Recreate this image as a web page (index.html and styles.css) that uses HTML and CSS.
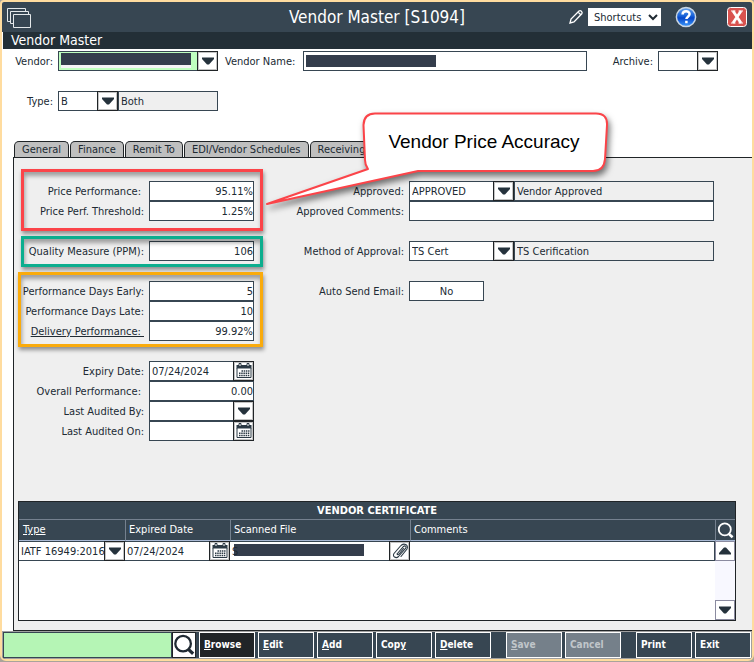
FILE: index.html
```html
<!DOCTYPE html>
<html lang="en">
<head>
<meta charset="utf-8">
<title>Vendor Master [S1094]</title>
<link rel="stylesheet" href="styles.css">
</head>
<body>
<svg class="defs" aria-hidden="true">
  <symbol id="down" viewBox="0 0 18 18"><path d="M3 5.500h12v1.500l-5 5.500H8L3 7z" fill="#25323c"/></symbol>
  <symbol id="up" viewBox="0 0 18 18"><path d="M3 12.500h12V11l-5-5.500H8L3 11z" fill="#25323c"/></symbol>
  <symbol id="cal" viewBox="0 0 18 18">
    <path d="M1.500 3h15v3.500h-15z" fill="#2c3a45"/>
    <path d="M4 1.500h2v3H4zM12 1.500h2v3h-2z" fill="#fff" stroke="#2c3a45"/>
    <path d="M2 6v9.500h14V6" fill="none" stroke="#2c3a45"/>
    <path d="M6.500 9h8M4 11.300h10.500M4 13.500h10.500" stroke="#2c3a45" stroke-width="1.500" stroke-dasharray="1.500 .7"/>
  </symbol>
  <symbol id="lens" viewBox="0 0 24 24"><circle cx="11" cy="10.500" r="8.500" fill="none" stroke="currentColor" stroke-width="2.500"/><path d="M16.500 16.500l5.500 5" stroke="currentColor" stroke-width="3.600"/></symbol>
  <symbol id="clip" viewBox="0 0 18 18"><path d="M6 12l6.500-7.500c1.500-1.500 3.300 0 2.200 1.600L7.500 14.500C5 17 1 14.500 3 11.500L9.500 4c3-3.500 8.500-1.500 6.500 3l-6 7.500M6 12c.6 1 1.700.6 2.500-.5l4-5" fill="none" stroke="#2c3a45" stroke-width="1.100" stroke-linecap="round"/></symbol>
</svg>

<main class="window">
  <header class="titlebar">
    <svg class="stack" width="26" height="22" viewBox="0 0 26 22" aria-hidden="true">
      <g fill="#374652" stroke="#e4e8ea"><path d="M.5 2.500h18v13h-18z"/><path d="M3.500 5.500h18v12h-18z"/><path d="M6.500 8.500h17v13h-17z"/></g>
    </svg>
    <h1>Vendor Master [S1094]</h1>
    <div class="tools">
      <svg class="pencil" width="16" height="16" viewBox="0 0 16 16" aria-hidden="true"><path d="M2 14l1-4 8-8c1.500-1.200 4 1 2.800 2.800L6 13zM10 3l3 3" fill="none" stroke="#fff" stroke-width="1.300"/></svg>
      <select class="shortcuts" aria-label="Shortcuts"><option>Shortcuts</option></select>
      <button class="help" aria-label="Help"><svg width="22" height="22" viewBox="0 0 22 22"><defs><linearGradient id="blue" x2="0" y2="1"><stop stop-color="#6fa8ee"/><stop offset=".45" stop-color="#1560d8"/><stop offset=".55" stop-color="#0646c8"/><stop offset="1" stop-color="#3d9cff"/></linearGradient></defs><circle cx="11" cy="11" r="9.600" fill="url(#blue)" stroke="#c9d6e4" stroke-width="1.500"/><path d="M7.600 8.500c0-4.300 7-4.300 7-.4 0 2.600-3.200 2.500-3.200 5M11.400 14.800v2.400" fill="none" stroke="#fff" stroke-width="2.500"/></svg></button>
      <button class="close" aria-label="Close"><svg width="20" height="20" viewBox="0 0 20 20"><rect x=".5" y=".5" width="19" height="19" rx="3" fill="#d9534f" stroke="#fff"/><path d="M6 4l8 12M14 4L6 16" stroke="#fff" stroke-width="2.800"/><path d="M4 4h4.500M11.500 4H16M4 16h4.500M11.500 16H16" stroke="#fff" stroke-width="1.200"/></svg></button>
    </div>
  </header>
  <h2 class="subtitle">Vendor Master</h2>

  <section class="head">
    <div class="line">
      <label class="lead" for="vendor">Vendor:</label>
      <span class="combo wide"><input id="vendor" class="green masked"><button aria-label="Choose vendor"><svg><use href="#down"/></svg></button></span>
      <label class="name" for="vname">Vendor Name:</label>
      <input id="vname" class="grow masked">
      <label class="archive" for="arch">Archive:</label>
      <span class="combo small"><input id="arch"><button aria-label="Choose archive"><svg><use href="#down"/></svg></button></span>
    </div>
    <div class="line">
      <label class="lead" for="type">Type:</label>
      <span class="combo small"><input id="type" value="B"><button aria-label="Choose type"><svg><use href="#down"/></svg></button></span>
      <input class="desc" value="Both" readonly aria-label="Type description">
    </div>
  </section>

  <nav class="tabs">
    <button>General</button><button>Finance</button><button>Remit To</button><button>EDI/Vendor Schedules</button><button>Receiving</button>
  </nav>

  <section class="panel">
    <div class="columns">
      <div class="col left">
        <div class="group red">
          <div class="row"><label class="inset" for="pp">Price Performance:</label><input id="pp" class="num" value="95.11%"></div>
          <div class="row"><label for="pt">Price Perf. Threshold:</label><input id="pt" class="num" value="1.25%"></div>
        </div>
        <div class="group teal">
          <div class="row"><label for="qm">Quality Measure (PPM):</label><input id="qm" class="num" value="106"></div>
        </div>
        <div class="group orange">
          <div class="row"><label for="pe">Performance Days Early:</label><input id="pe" class="num" value="5"></div>
          <div class="row"><label for="pl">Performance Days Late:</label><input id="pl" class="num" value="10"></div>
          <div class="row"><label for="dp"><u>Delivery Performance:&nbsp;</u></label><input id="dp" class="num" value="99.92%"></div>
        </div>
        <div class="group">
          <div class="row"><label for="ed">Expiry Date:</label><span class="combo"><input id="ed" value="07/24/2024"><button aria-label="Pick expiry date"><svg><use href="#cal"/></svg></button></span></div>
          <div class="row"><label class="inset" for="op">Overall Performance:</label><input id="op" class="num" value="0.00"></div>
          <div class="row"><label for="lb">Last Audited By:</label><span class="combo"><input id="lb"><button aria-label="Choose auditor"><svg><use href="#down"/></svg></button></span></div>
          <div class="row"><label for="lo">Last Audited On:</label><span class="combo"><input id="lo"><button aria-label="Pick audit date"><svg><use href="#cal"/></svg></button></span></div>
        </div>
      </div>
      <div class="col right">
        <div class="group">
          <div class="row"><label for="ap">Approved:</label><span class="combo code"><input id="ap" value="APPROVED"><button aria-label="Choose approval"><svg><use href="#down"/></svg></button></span><input class="desc grow" value="Vendor Approved" readonly aria-label="Approval description"></div>
          <div class="row"><label for="ac">Approved Comments:</label><input id="ac" class="grow"></div>
        </div>
        <div class="group">
          <div class="row"><label for="ma">Method of Approval:</label><span class="combo code"><input id="ma" value="TS Cert"><button aria-label="Choose method"><svg><use href="#down"/></svg></button></span><input class="desc grow" value="TS Cerification" readonly aria-label="Method description"></div>
        </div>
        <div class="group">
          <div class="row"><label for="ae">Auto Send Email:</label><input id="ae" class="flag" value="No"></div>
        </div>
      </div>
    </div>

    <table class="cert">
      <colgroup><col class="c-type"><col class="c-date"><col class="c-file"><col><col class="c-bar"></colgroup>
      <thead>
        <tr class="cap"><th colspan="5">VENDOR CERTIFICATE</th></tr>
        <tr class="heads"><th><u>Type</u></th><th>Expired Date</th><th>Scanned File</th><th>Comments</th><th class="find"><button aria-label="Search certificates"><svg><use href="#lens"/></svg></button></th></tr>
      </thead>
      <tbody>
        <tr class="entry">
          <td><span class="combo"><input value="IATF 16949:2016" aria-label="Type"><button aria-label="Choose type"><svg><use href="#down"/></svg></button></span></td>
          <td><span class="combo"><input value="07/24/2024" aria-label="Expired date"><button aria-label="Pick date"><svg><use href="#cal"/></svg></button></span></td>
          <td><span class="combo"><input class="masked file" value="S" aria-label="Scanned file"><button aria-label="Attach file"><svg><use href="#clip"/></svg></button></span></td>
          <td><input aria-label="Comments"></td>
          <td rowspan="2"><div class="scroll"><button aria-label="Scroll up"><svg><use href="#up"/></svg></button><button aria-label="Scroll down"><svg><use href="#down"/></svg></button></div></td>
        </tr>
        <tr class="blank"><td colspan="4"></td></tr>
      </tbody>
    </table>

    <aside class="callout">
      <svg viewBox="0 0 354 106" aria-hidden="true"><path d="M115 5.500H336Q347.500 5.500 347 17L345 51Q344 63 333 63H158L7 96L108 61Q105 57 105 52L103.500 17Q104 5.500 115 5.500Z" fill="#fff" stroke="#fb4449" stroke-width="2" stroke-linejoin="round"/></svg>
      <p>Vendor Price Accuracy</p>
    </aside>
  </section>

  <footer class="actions">
    <input class="query" aria-label="Search">
    <button class="go" aria-label="Search"><svg><use href="#lens"/></svg></button>
    <button class="act current"><u>B</u>rowse</button>
    <button class="act"><u>E</u>dit</button>
    <button class="act"><u>A</u>dd</button>
    <button class="act">Cop<u>y</u></button>
    <button class="act"><u>D</u>elete</button>
    <button class="act apart" disabled><u>S</u>ave</button>
    <button class="act" disabled>Cancel</button>
    <button class="act apart">Print</button>
    <button class="act">Exit</button>
  </footer>
</main>
</body>
</html>
```
FILE: styles.css
```css
* { box-sizing: border-box; }

body {
  margin: 0;
  background: #a9a49a;
  color: #202a33;
  font: 11px/20px "DejaVu Sans Condensed", "DejaVu Sans", sans-serif;
}

h1, h2, p { margin: 0; font-weight: normal; }
.defs { position: absolute; width: 0; height: 0; }
input, button, select { font: inherit; color: inherit; border-radius: 0; margin: 0; }
button { padding: 0; border: 0; background: none; }
svg { display: block; }
label { height: 20px; padding-top: 1px; white-space: nowrap; text-align: right; }

.window {
  border: 2px solid #ffdc9f;
  border-radius: 4px 4px 6px 6px;
  background: #fff;
  overflow: hidden;
}

.titlebar {
  display: grid;
  grid-template-columns: 1fr auto 1fr;
  align-items: center;
  height: 30px;
  padding: 0 5px;
  background: #374652;
  color: #fff;
}
.titlebar h1 { font-size: 17px; }
.tools { display: flex; align-items: center; justify-content: flex-end; }
.pencil { margin-right: 4px; }
.shortcuts {
  width: 73px;
  height: 18px;
  border: 0;
  padding: 0 0 0 2px;
  background: #fff;
  color: #202a33;
}
.help { margin: 0 30px 0 14px; }

.subtitle {
  height: 17px;
  margin-left: 1px;
  padding-left: 8px;
  background: #232f37;
  color: #fff;
  font-size: 14px;
  line-height: 16px;
}

.head {
  display: flex;
  flex-direction: column;
  gap: 20px;
  padding: 2px 34px 30px 0;
}
.line { display: flex; }
.lead { width: 51px; margin-right: 5px; }
.name { margin: 0 8px 0 7px; }
.archive { margin: 0 5px 0 26px; }

input {
  display: block;
  min-width: 0;
  height: 20px;
  padding: 2px 2px 0;
  border: 1px solid #374652;
  background: #fff;
}
.grow { flex: 1; }
.desc { background: #efefef; width: 100px; }
.green { background-color: #bfffbf; }
.masked {
  background-image: linear-gradient(#343d4c, #343d4c);
  background-repeat: no-repeat;
  background-size: 130px 12px;
  background-position: 2px 3px;
}

.combo { display: flex; width: 105px; }
.combo input { flex: 1; border-right: 0; }
.combo button {
  width: 21px;
  height: 20px;
  border: 1px solid #202427;
  background: #fff;
  box-shadow: inset 0 0 0 1px #c4c4c4;
}
.combo svg { width: 18px; height: 18px; margin: 0 auto; }
.wide { width: 160px; }
.wide .masked {
  background-image: linear-gradient(#343d4c, #343d4c), linear-gradient(#f6f3f6, #f6f3f6);
  background-size: 130px 12px, 130px 15px;
  background-position: 2px 1px;
}
.small { width: 60px; }

.tabs {
  display: flex;
  gap: 1px;
  margin-left: 12px;
}
.tabs button {
  height: 16px;
  padding: 0 7px;
  border: solid #202427;
  border-width: 1px 1px 0;
  border-radius: 5px 5px 0 0;
  background: #bfbfbf;
  line-height: 15px;
}

.panel {
  position: relative;
  margin-left: 11px;
  padding: 23px 16px 9px 4px;
  border: solid #202427;
  border-width: 1px 0 1px 1px;
  background: #efefef;
}
.columns { display: flex; padding-right: 22px; }
.col { display: flex; flex-direction: column; gap: 20px; }
.left { width: 236px; }
.right { flex: 1; }
.group { position: relative; }
.row { display: flex; }
.row label { flex: none; width: 126px; margin-right: 5px; }
.row .inset { padding-right: 3px; }
.left label { display: flex; justify-content: flex-end; }
.right .row label { width: 150px; }
.num { width: 105px; padding-right: 0; text-align: right; }
.flag { width: 75px; text-align: center; }

.red::after, .teal::after, .orange::after {
  content: "";
  position: absolute;
  border: 3px solid;
  pointer-events: none;
  box-shadow: 1px 3px 4px #0006, inset 1px 4px 4px #0005;
}
.red::after { inset: -12px -9px -10px 3px; border-color: #fb4449; }
.teal::after { inset: -5px -9px -6px 3px; border-color: #0cae8e; }
.orange::after { inset: -9px -9px -6px 0; border-color: #faab0c; }

.cert {
  width: 100%;
  margin-top: 60px;
  table-layout: fixed;
  border-collapse: separate;
  border-spacing: 0;
  border: 1px solid #202427;
  background: #fff;
}
.cert th, .cert td { padding: 0; }
.c-type { width: 106px; }
.c-date { width: 105px; }
.c-file { width: 180px; }
.c-bar { width: 20px; }
.cert th { background: #374652; color: #fff; text-align: left; font-weight: normal; }
.cert .cap th { height: 18px; line-height: 17px; text-align: center; font-weight: bold; border-bottom: 1px solid #75818f; }
.heads th { height: 21px; border-bottom: 1px solid #a9b9d4; }
.cert .heads th { padding-left: 4px; }
.cert .heads th + th { padding-left: 3px; border-left: 1px solid #75818f; }
.cert .heads .find { padding: 0; }
.find button { display: block; margin: 0 auto; }
.find svg { width: 17px; height: 17px; }
.cert .combo { width: auto; }
.entry input { width: 100%; border-width: 1px 1px 1px 0; }
.entry .combo input { border-right: 0; padding-right: 0; }
.entry .file { background-position: 4px 2px; }
.blank td { height: 59px; }
.scroll {
  display: flex;
  flex-direction: column;
  justify-content: space-between;
  height: 79px;
  background: #f8f8ff;
}
.scroll button { height: 20px; border: 1px solid #8b8ba0; background: #fff; }
.scroll svg { width: 18px; height: 18px; }

.callout {
  position: absolute;
  left: 246px;
  top: -50px;
  width: 354px;
  height: 106px;
}
.callout svg { filter: drop-shadow(2px 4px 3px #0008); }
.callout p {
  position: absolute;
  inset: 6px 10px auto 104px;
  color: #000;
  font: 19px/56px "Liberation Sans", sans-serif;
  text-align: center;
}

.actions {
  display: flex;
  gap: 3px;
  height: 28px;
  border: 1px solid #a0a0a0;
  background: #374652;
}
.actions .query { flex: 1; height: 26px; background: #b5f5b5; }
.go { width: 24px; margin-left: -3px; border: 1px solid #202427; background: #fff; color: #202a33; }
.go svg { width: 22px; height: 22px; }
.act {
  width: 56px;
  padding-left: 4px;
  border: 1px solid #fff;
  background: #374652;
  color: #fff;
  font-size: 10px;
  font-weight: bold;
  text-align: left;
}
.current { background: #202427; }
.act:disabled { background: #75808a; color: #c0c6ca; }
.apart { margin-left: 12px; }
```
